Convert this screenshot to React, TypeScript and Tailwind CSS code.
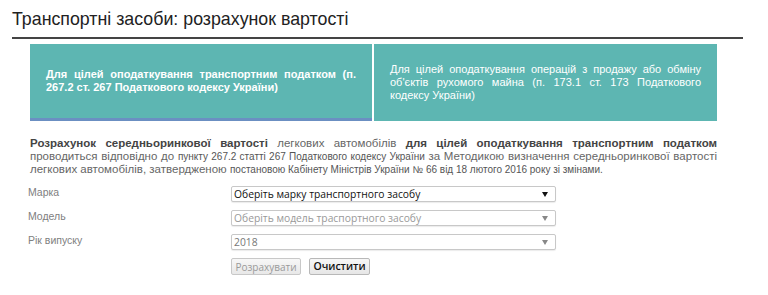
import React from "react";

const sans = { fontFamily: '"Liberation Sans", Arial, sans-serif' };

function Select({ text, muted, darkArrow }: { text: string; muted?: string; darkArrow?: boolean }) {
  return (
    <div className="flex h-[16px] w-[325px] items-center justify-between rounded-[2px] border border-[#c8c8c8] bg-white pl-[2px] pr-[7px] shadow-[0_1px_1px_rgba(0,0,0,0.08)]">
      <span className={`font-['Open_Sans',sans-serif] text-[10.3px] leading-none ${muted ?? "text-[#111]"}`}>{text}</span>
      <svg width="6" height="5" viewBox="0 0 6 5">
        <path d="M0 0 L6 0 L3 5 Z" fill={darkArrow ? "#111" : "#888"} />
      </svg>
    </div>
  );
}

export default function App() {
  return (
    <div className="h-[295px] w-[768px] bg-white font-['Liberation_Sans',Arial,sans-serif]">
      <div className="ml-[12px] w-[731px]">
        <h1 className="pt-[8px] text-[17.8px] leading-[22px] text-[#222]">Транспортні засоби: розрахунок вартості</h1>
        <div className="mt-[7px] h-[2px] bg-[#444]" />
        <div className="ml-[18px] mt-[5px] flex h-[77px] w-[687px] gap-[2px]">
          <div className="flex w-[342px] flex-col bg-[#5db6b2]">
            <div className="flex flex-1 items-center px-[16px]">
              <p className="text-justify text-[11px] font-bold leading-[13px] text-white">
                Для цілей оподаткування транспортним податком (п. 267.2 ст. 267 Податкового кодексу України)
              </p>
            </div>
            <div className="h-[3px] bg-[#6b8fc2]" />
          </div>
          <div className="flex w-[343px] items-center bg-[#5db6b2] px-[16px]">
            <p className="text-justify text-[11px] leading-[13px] text-white">
              Для цілей оподаткування операцій з продажу або обміну об'єктів рухомого майна (п. 173.1 ст. 173 Податкового кодексу України)
            </p>
          </div>
        </div>
        <div className="ml-[18px] mt-[16px] w-[687px] text-[11.5px] leading-[13px] text-[#666]" style={sans}>
          <div className="text-justify [text-align-last:justify]">
            <b className="text-[#444]">Розрахунок середньоринкової вартості</b> легкових автомобілів{" "}
            <b className="text-[#444]">для цілей оподаткування транспортним податком</b>
          </div>
          <div className="text-justify [text-align-last:justify]">
            проводиться відповідно до{" "}
            <span className="text-[10px] text-[#555]">пункту 267.2 статті 267 Податкового кодексу України</span> за Методикою визначення середньоринкової вартості
          </div>
          <div>
            легкових автомобілів, затвердженою{" "}
            <span className="text-[10px] text-[#555]">
              постановою Кабінету Міністрів України № 66 від 18 лютого 2016 року зі змінами.
            </span>
          </div>
        </div>
        <div className="mt-[10px] flex flex-col gap-[8px]">
          <div className="flex items-start">
            <span className="ml-[16px] w-[203px] text-[10.5px] leading-[12px] text-[#808080]">Марка</span>
            <Select text="Оберіть марку транспортного засобу" darkArrow />
          </div>
          <div className="flex items-start">
            <span className="ml-[16px] w-[203px] text-[10.5px] leading-[12px] text-[#808080]">Модель</span>
            <Select text="Оберіть модель траспортного засобу" muted="text-[#999]" />
          </div>
          <div className="flex items-start">
            <span className="ml-[16px] w-[203px] text-[10.5px] leading-[12px] text-[#808080]">Рік випуску</span>
            <Select text="2018" muted="text-[#777]" />
          </div>
          <div className="ml-[219px] flex gap-[8px]">
            <button className="flex h-[17px] w-[70px] items-center justify-center rounded-[2px] border border-[#c8c8c8] bg-gradient-to-b from-[#f7f7f7] to-[#e8e8e8] font-['Open_Sans',sans-serif] text-[10px] leading-none text-[#9a9a9a]">
              Розрахувати
            </button>
            <button className="flex h-[17px] w-[61px] items-center justify-center rounded-[2px] border border-[#b8b8b8] bg-gradient-to-b from-[#f7f7f7] to-[#e6e6e6] font-['Open_Sans',sans-serif] text-[10.5px] font-semibold leading-none text-[#111]">
              Очистити
            </button>
          </div>
        </div>
      </div>
    </div>
  );
}
